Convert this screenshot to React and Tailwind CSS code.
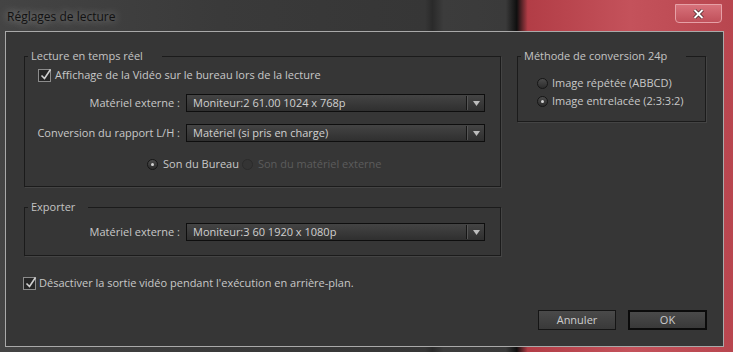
import React from "react";

const Check = () => (
  <span className="relative block w-[13px] h-[13px] shrink-0 border border-[#8c8c8c] bg-[#262626]">
    <svg className="absolute -top-[2px] left-[1px]" width="12" height="13" viewBox="0 0 12 13">
      <path d="M1.5 7.5 L4.5 10.5 L10.5 1.5" stroke="#cfcfcf" strokeWidth="1.6" fill="none" />
    </svg>
  </span>
);

const Radio = ({ on, disabled }) => (
  <span
    className={
      disabled
        ? "flex items-center justify-center w-[11px] h-[11px] shrink-0 rounded-full border border-[#2b2b2b] bg-[#343434]"
        : "flex items-center justify-center w-[11px] h-[11px] shrink-0 rounded-full border border-[#161616] bg-[linear-gradient(#4c4c4c,#2c2c2c)]"
    }
  >
    {on && <span className="w-[3px] h-[3px] rounded-full bg-[#d4d4d4]" />}
  </span>
);

const Select = ({ value }) => (
  <div className="flex items-center w-[299px] h-[18px] border border-[#0e0e0e] bg-[linear-gradient(#444,#2f2f2f)]">
    <span className="flex-1 pl-[6px] text-[#d0d0d0] leading-[16px] whitespace-nowrap">{value}</span>
    <span className="w-[2px] h-[14px] border-l border-[#151515] border-r border-r-[#555]" />
    <span className="flex justify-center w-[16px]">
      <svg width="7" height="5" viewBox="0 0 7 5">
        <path d="M0 0H7L3.5 5Z" fill="#bdbdbd" />
      </svg>
    </span>
  </div>
);

const Legend = ({ children, w }) => (
  <legend className={`ml-[3px] pl-[3px] h-[16px] leading-[16px] text-[#c4c4c4] whitespace-nowrap ${w}`}>{children}</legend>
);

const Button = ({ children, primary }) => (
  <button
    className={
      primary
        ? "w-[79px] h-[20px] border-2 border-[#0b0b0b] bg-[linear-gradient(#4a4a4a,#393939)] text-[#cdcdcd] leading-[16px]"
        : "w-[78px] h-[20px] border border-[#151515] bg-[linear-gradient(#4a4a4a,#393939)] text-[#cdcdcd] leading-[18px]"
    }
  >
    {children}
  </button>
);

export default function App() {
  return (
    <div className="w-[733px] h-[352px] overflow-hidden font-['Open_Sans',sans-serif] text-[11px] bg-[linear-gradient(90deg,#444_0%,#3a3a3a_30%,#363636_58%,#2a2a2a_59%,#3c3c3c_60.5%,#3a3a3a_69%,#0f0f0f_70.5%,#b23d46_72%,#c4525b_86%,#b8464f_100%)]">
      <div className="flex justify-between h-[31px]">
        <span className="pl-[7px] pt-[8px] text-[12px] leading-[18px] text-[#111] [text-shadow:0_0_8px_rgba(255,255,255,0.55)]">
          Réglages de lecture
        </span>
        <div className="mt-[4px] mr-[11px] flex items-center justify-center w-[47px] h-[19px] rounded-b-[4px] border border-[#e6a0a6] bg-[linear-gradient(#d7717a,#c0505a)]">
          <svg width="11" height="10" viewBox="0 0 11 10">
            <path d="M1.5 1 L9.5 9 M9.5 1 L1.5 9" stroke="#3a1a1e" strokeWidth="3.4" />
            <path d="M1.5 1 L9.5 9 M9.5 1 L1.5 9" stroke="#fff" strokeWidth="2" />
          </svg>
        </div>
      </div>

      <div className="ml-[5px] w-[719px] h-[316px] border border-[#a9a9a9] bg-[#363636] pt-[16px] pl-[17px] pr-[16px] text-[#c8c8c8]">
        <div className="flex items-start">
          <div className="ml-[1px] w-[477px]">
            <fieldset className="border border-[#1b1b1b] shadow-[1px_1px_0_#444] p-0">
              <Legend w="w-[134px]">Lecture en temps réel</Legend>
              <div className="pt-[3px] pb-[14px]">
                <div className="flex items-center gap-[4px] h-[16px] pl-[13px]">
                  <Check />
                  <span className="leading-[16px]">Affichage de la Vidéo sur le bureau lors de la lecture</span>
                </div>
                <div className="flex items-center h-[18px] mt-[11px]">
                  <span className="w-[156px] text-right pr-[1px] whitespace-nowrap">Matériel externe :</span>
                  <span className="w-[5px]" />
                  <Select value="Moniteur:2 61.00 1024 x 768p" />
                </div>
                <div className="flex items-center h-[18px] mt-[12px]">
                  <span className="w-[156px] text-right pr-[1px] whitespace-nowrap">Conversion du rapport L/H :</span>
                  <span className="w-[5px]" />
                  <Select value="Matériel (si pris en charge)" />
                </div>
                <div className="flex items-center h-[16px] mt-[14px] pl-[122px]">
                  <Radio on />
                  <span className="ml-[5px]">Son du Bureau</span>
                  <span className="ml-[3px]">
                    <Radio disabled />
                  </span>
                  <span className="ml-[5px] text-[#5c5c5c]">Son du matériel externe</span>
                </div>
              </div>
            </fieldset>

            <fieldset className="mt-[12px] border border-[#1b1b1b] shadow-[1px_1px_0_#444] p-0">
              <Legend w="w-[60px]">Exporter</Legend>
              <div className="pt-[8px] pb-[14px] flex items-center h-[40px]">
                <span className="w-[156px] text-right pr-[1px] whitespace-nowrap">Matériel externe :</span>
                <span className="w-[5px]" />
                <Select value="Moniteur:3 60 1920 x 1080p" />
              </div>
            </fieldset>
          </div>

          <fieldset className="ml-[16px] w-[189px] border border-[#1b1b1b] shadow-[1px_1px_0_#444] p-0">
            <Legend w="w-[165px]">Méthode de conversion 24p</Legend>
            <div className="pt-[11px] pb-[12px] pl-[19px]">
              <div className="flex items-center h-[16px] gap-[4px]">
                <Radio />
                <span>Image répétée (ABBCD)</span>
              </div>
              <div className="flex items-center h-[16px] gap-[4px] mt-[2px]">
                <Radio on />
                <span>Image entrelacée (2:3:3:2)</span>
              </div>
            </div>
          </fieldset>
        </div>

        <div className="flex items-center gap-[3px] h-[16px] mt-[19px]">
          <Check />
          <span>Désactiver la sortie vidéo pendant l'exécution en arrière-plan.</span>
        </div>

        <div className="flex justify-end gap-[12px] mt-[19px]">
          <Button>Annuler</Button>
          <Button primary>OK</Button>
        </div>
      </div>
    </div>
  );
}
